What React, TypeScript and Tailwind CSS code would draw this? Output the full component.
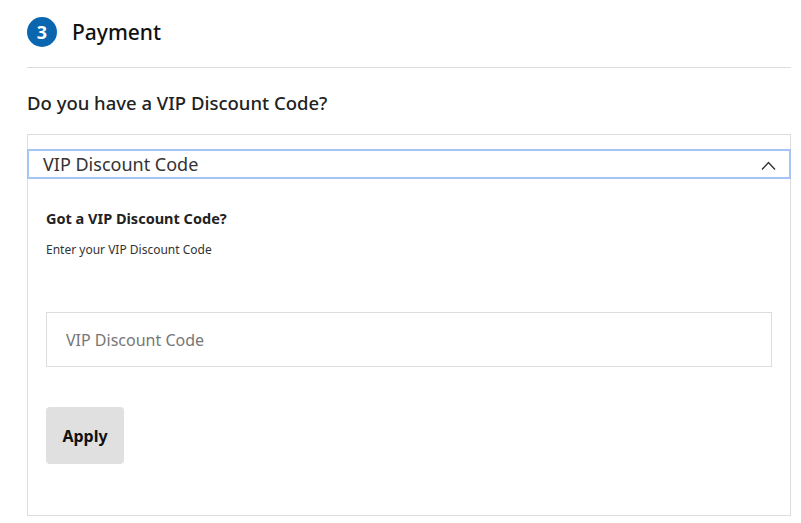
export default function App() {
  return (
    <div
      className="min-h-[523px] w-[801px] bg-white pl-[27px] pr-[10px] pt-[17px] text-[#222]"
      style={{ fontFamily: '"Noto Sans", sans-serif' }}
    >
      <div className="flex items-center gap-[15px]">
        <div className="flex h-[30px] w-[30px] items-center justify-center rounded-full bg-[#0b66b0] text-[18px] font-bold leading-none text-white">
          3
        </div>
        <h1 className="text-[21px] font-medium leading-[30px] text-[#111]">Payment</h1>
      </div>

      <div className="mt-[20px] h-px w-full bg-[#dddddd]" />

      <h2 className="mt-[23px] text-[18.5px] font-medium leading-[24px] text-[#222]">
        Do you have a VIP Discount Code?
      </h2>

      <div className="mt-[19px] h-[382px] w-[764px] border border-[#dddddd] pt-[14px]">
        <button
          type="button"
          className="-mx-px flex h-[30px] w-[764px] items-center justify-between border-2 border-[#a7c4f7] pl-[14px] pr-[13px] text-left"
        >
          <span className="text-[18px] leading-none text-[#333]">VIP Discount Code</span>
          <svg width="15" height="9" viewBox="0 0 15 9" fill="none" className="mt-[2px]">
            <polyline points="1,8.5 7.5,1.5 14,8.5" stroke="#333" strokeWidth="1.4" />
          </svg>
        </button>

        <div className="px-[18px]">
          <p className="mt-[29px] text-[14.5px] font-bold leading-[20px] text-[#222]">
            Got a VIP Discount Code?
          </p>
          <p className="mt-[14px] text-[12px] leading-[16px] text-[#333]">
            Enter your VIP Discount Code
          </p>

          <input
            type="text"
            placeholder="VIP Discount Code"
            className="mt-[54px] block h-[55px] w-[726px] border border-[#dddddd] px-[19px] text-[16px] text-[#333] outline-none placeholder:text-[#777]"
          />

          <button
            type="button"
            className="mt-[40px] h-[57px] w-[78px] rounded-[4px] bg-[#e0e0e0] text-[16px] font-bold text-[#111]"
          >
            Apply
          </button>
        </div>
      </div>
    </div>
  );
}
